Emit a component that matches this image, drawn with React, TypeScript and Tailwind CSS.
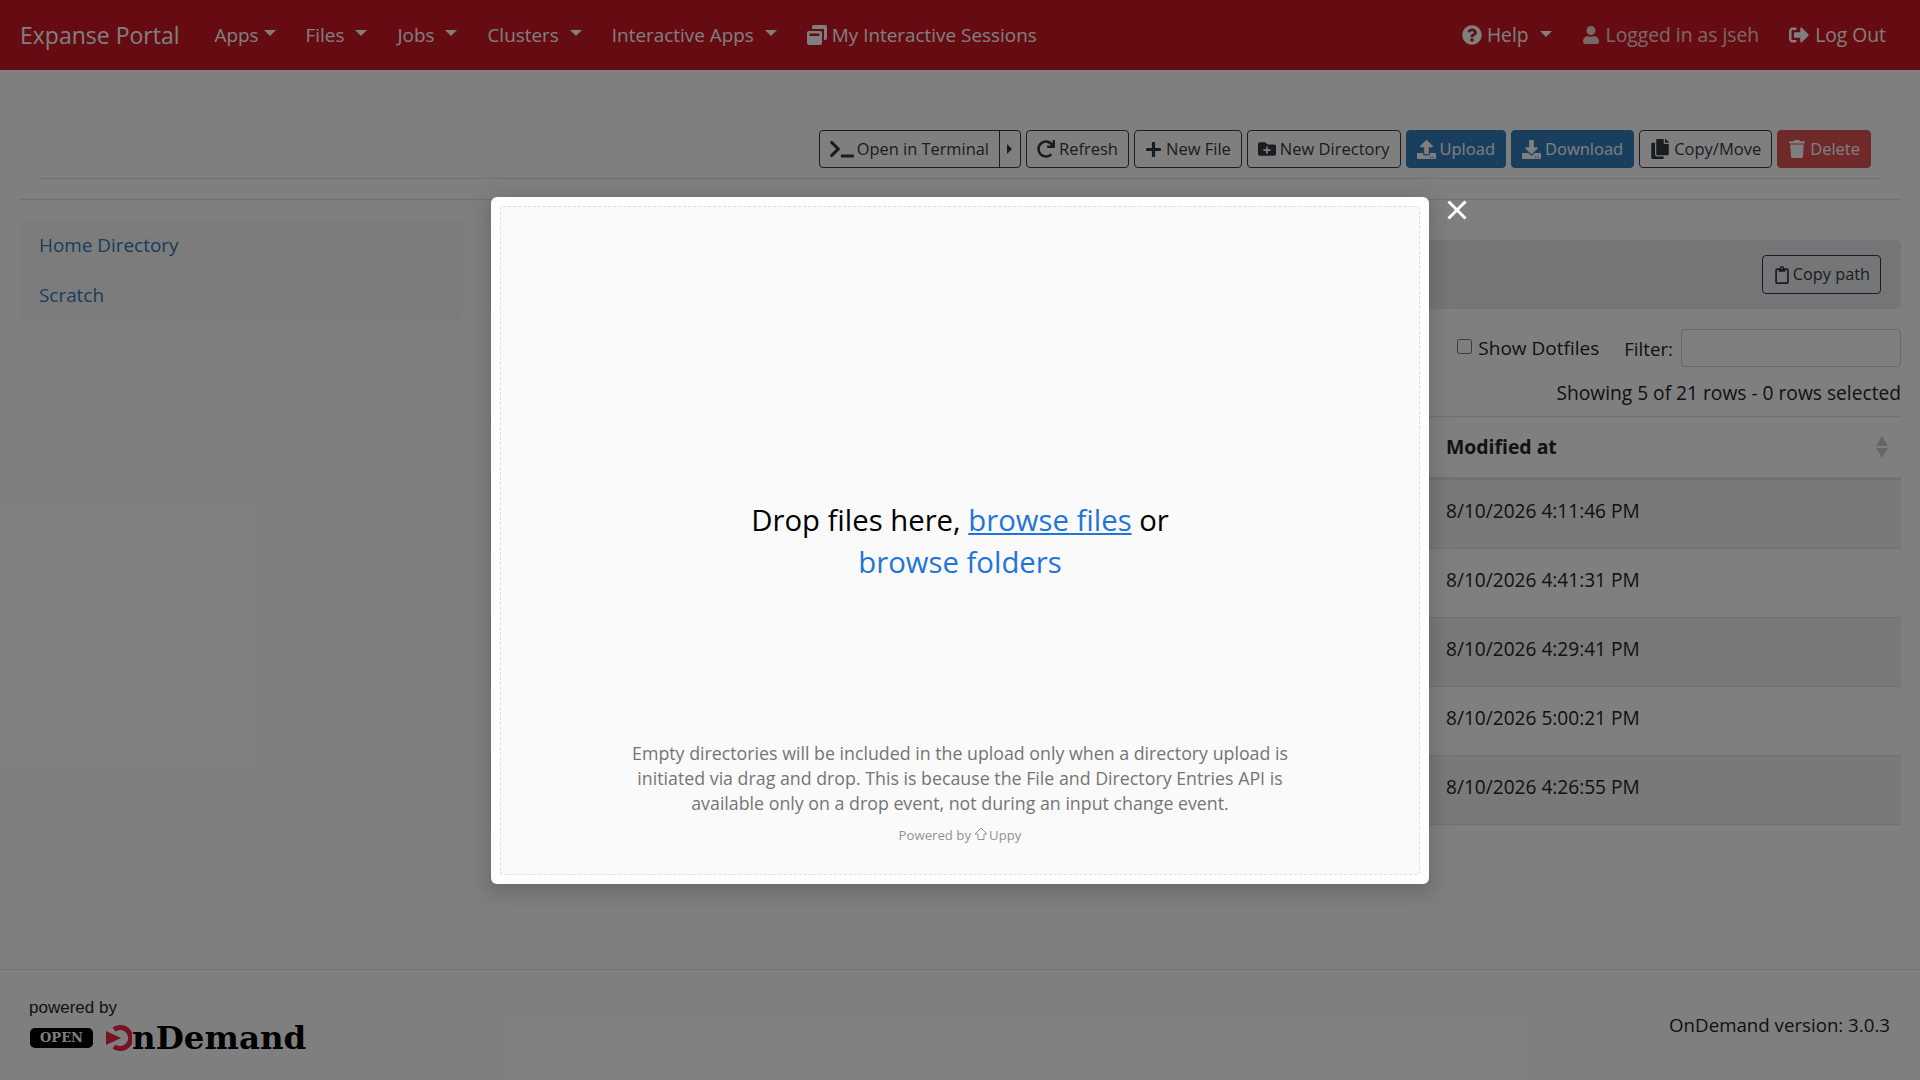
import React from 'react';
import {
  FaTerminal, FaRedo, FaPlus, FaFolderPlus, FaUpload, FaDownload, FaCopy, FaTrash,
  FaRegClipboard, FaQuestionCircle, FaUser, FaSignOutAlt,
} from 'react-icons/fa';

const NavLink = ({ label, spaced }: { label: string; spaced?: boolean }) => (
  <a className="mr-[10px] flex items-center px-[10px] text-[18.9px] text-white">
    {label}
    <span className={`${spaced ? 'ml-[11px]' : 'ml-[5px]'} mb-[3px] border-x-[6px] border-t-[6px] border-x-transparent border-t-white`} />
  </a>
);

const Btn = ({ icon, label, kind = 'outline' }: { icon: React.ReactNode; label: string; kind?: string }) => {
  const colors =
    kind === 'primary'
      ? 'bg-[#347dbb] border-[#347dbb] text-white'
      : kind === 'danger'
      ? 'bg-[#e05252] border-[#e05252] text-white'
      : 'border-[#343a40] text-[#343a40]';
  return (
    <button className={`flex h-[38px] items-center gap-[4px] rounded-[4px] border px-[10px] text-[16.5px] ${colors}`}>
      {icon}
      {label}
    </button>
  );
};

const rows = [
  '8/10/2026 4:11:46 PM',
  '8/10/2026 4:41:31 PM',
  '8/10/2026 4:29:41 PM',
  '8/10/2026 5:00:21 PM',
  '8/10/2026 4:26:55 PM',
];

export default function App() {
  return (
    <div className="relative flex h-[1080px] w-full flex-col overflow-hidden bg-white font-['Open_Sans',sans-serif] text-[19.1px] text-[#212529]">
      {/* Navbar */}
      <nav className="flex h-[70px] shrink-0 items-center justify-between bg-[#cd1622] pl-[10px] pr-[24px] text-[18.9px]">
        <div className="flex items-center">
          <a className="ml-[10px] mr-[25px] text-[23px] text-white">Expanse Portal</a>
          <NavLink label="Apps" />
          <NavLink label="Files" spaced />
          <NavLink label="Jobs" spaced />
          <NavLink label="Clusters" spaced />
          <NavLink label="Interactive Apps" spaced />
          <a className="flex items-center gap-[5px] px-[10px] text-white">
            <svg viewBox="0 0 20 21" className="h-[21px] w-[20px]" fill="currentColor">
              <path d="M5 5V3a2 2 0 0 1 2-2h11a2 2 0 0 1 2 2v11a2 2 0 0 1-2 2h-1V5Z" />
              <path fillRule="evenodd" d="M2 7h11a2 2 0 0 1 2 2v10a2 2 0 0 1-2 2H2a2 2 0 0 1-2-2V9a2 2 0 0 1 2-2ZM2.5 9.5v2.5h10V9.5Z" />
            </svg>
            My Interactive Sessions
          </a>
        </div>
        <div className="flex items-center text-[19.3px]">
          <a className="mr-[10px] flex items-center gap-[5px] px-[10px] text-white">
            <FaQuestionCircle className="text-[20px]" />
            <span className="flex items-center">
              Help
              <span className="ml-[11px] mb-[3px] border-x-[6px] border-t-[6px] border-x-transparent border-t-white" />
            </span>
          </a>
          <a className="mr-[10px] flex items-center gap-[6px] px-[10px] text-white/80">
            <FaUser className="text-[18px]" />
            Logged in as jseh
          </a>
          <a className="flex items-center gap-[6px] px-[10px] text-white">
            <FaSignOutAlt className="text-[20px]" />
            Log Out
          </a>
        </div>
      </nav>

      {/* Main */}
      <main className="flex-1 pl-[20px] pr-[19px]">
        <div className="ml-[17px] mr-[20px] flex justify-end gap-[5px] border-b border-[#dee2e6] pb-[10px] pr-[10px] pt-[60px]">
          <div className="flex h-[38px] rounded-[4px] border border-[#343a40] text-[16.4px] text-[#343a40]">
            <span className="flex items-center gap-[3px] border-r border-[#343a40] px-[10px]">
              <FaTerminal className="text-[24px]" />
              Open in Terminal
            </span>
            <span className="flex w-[20px] items-center justify-center">
              <span className="border-y-[5px] border-l-[5px] border-y-transparent border-l-[#343a40]" />
            </span>
          </div>
          <Btn icon={<FaRedo className="text-[18px]" />} label="Refresh" />
          <Btn icon={<FaPlus className="text-[17px]" />} label="New File" />
          <Btn icon={<FaFolderPlus className="text-[18px]" />} label="New Directory" />
          <Btn icon={<FaUpload className="text-[19px]" />} label="Upload" kind="primary" />
          <Btn icon={<FaDownload className="text-[19px]" />} label="Download" kind="primary" />
          <Btn icon={<FaCopy className="text-[20px]" />} label="Copy/Move" />
          <Btn icon={<FaTrash className="text-[18px]" />} label="Delete" kind="danger" />
        </div>
        <div className="mt-[20px] flex border-t border-[#dee2e6] pt-[20px]">
          <aside className="w-[443px] shrink-0">
            <div className="rounded-[5px] bg-[#f8f9fa] text-[18.9px] text-[#337ab7]">
              <a className="flex h-[50px] items-center px-[19px] pt-[1px]">Home Directory</a>
              <a className="flex h-[50px] items-center px-[19px] pt-[1px]">Scratch</a>
            </div>
          </aside>
          <section className="ml-[27px] flex-1">
            <div className="mt-[20px] flex h-[69px] items-center justify-end rounded-[5px] bg-[#e9ecef] pr-[20px]">
              <button className="flex h-[39px] items-center gap-[2px] rounded-[4px] border border-[#343a40] px-[10px] text-[16.3px] text-[#343a40]">
                <FaRegClipboard className="text-[18px]" />
                Copy path
              </button>
            </div>
            <div className="mt-[20px] flex h-[38px] items-center justify-end">
              <input type="checkbox" className="mr-[6px] mb-[3px] h-[15px] w-[15px] rounded-[3px]" />
              <span className="text-[19px]">Show Dotfiles</span>
              <span className="ml-[25px] mr-[8px] mt-[2px] text-[18.7px]">Filter:</span>
              <input className="h-[38px] w-[220px] rounded-[4px] border border-[#ced4da] bg-white" />
            </div>
            <div className="mt-[12px] border-b border-[#dee2e6] pb-[8px] text-right text-[19.2px]">
              Showing 5 of 21 rows - 0 rows selected
            </div>
            <div className="flex h-[63px] items-center justify-end border-b-[3px] border-[#dee2e6]">
              <div className="relative flex w-[455px] items-center text-[19.4px] font-bold">
                Modified at
                <span className="absolute right-[13px] top-1/2 flex -translate-y-1/2 flex-col gap-[2px]">
                  <span className="border-x-[6px] border-b-[10px] border-x-transparent border-b-black/20" />
                  <span className="border-x-[6px] border-t-[10px] border-x-transparent border-t-black/20" />
                </span>
              </div>
            </div>
            {rows.map((r, i) => (
              <div key={r} className={`flex h-[69px] items-center justify-end border-b border-[#dee2e6] pb-[5px] ${i % 2 === 0 ? 'bg-black/5' : ''}`}>
                <div className="w-[455px]">{r}</div>
              </div>
            ))}
          </section>
        </div>
      </main>

      {/* Footer */}
      <footer className="flex h-[111px] shrink-0 items-center justify-between border-t border-[#dee2e6] pl-[29px] pr-[30px]">
        <div className="-mt-[3px]">
          <div className="font-['Liberation_Sans',sans-serif] text-[17px] leading-[22px] text-[#212529]">powered by</div>
          <div className="mt-[6px] flex items-center">
            <span className="ml-[1px] flex h-[20px] w-[63px] items-center justify-center rounded-[5px] bg-black font-['DejaVu_Serif',serif] text-[13px] font-bold text-white">
              OPEN
            </span>
            <svg viewBox="0 0 26 26" className="ml-[13px] h-[26px] w-[26px]">
              <path d="M8 4.5A10.5 10.5 0 1 1 8 21.5" fill="none" stroke="#f02845" strokeWidth="5" />
              <path d="M0 6L15 13L0 20Z" fill="#f02845" />
            </svg>
            <span className="font-['DejaVu_Serif',serif] text-[32.5px] font-bold leading-[26px] text-black">nDemand</span>
          </div>
        </div>
        <div className="mt-[1px] text-[18.7px]">OnDemand version: 3.0.3</div>
      </footer>

      {/* Uppy modal overlay */}
      <div className="absolute inset-0 flex items-center justify-center bg-black/50">
        <div className="relative h-[687px] w-[938px] rounded-[6px] bg-white p-[9px] shadow-[0_6px_19px_5px_rgba(0,0,0,0.15)]">
          <button className="absolute right-[-38px] top-[3px] text-white">
            <svg viewBox="0 0 20 20" className="h-[20px] w-[20px]" fill="none" stroke="currentColor" strokeWidth="3">
              <path d="M1.5 1.5L18.5 18.5M18.5 1.5L1.5 18.5" />
            </svg>
          </button>
          <div className="flex h-full flex-col items-center rounded-[3px] border border-dashed border-[#dfdfdf] bg-[#fafafa]">
            <div className="mt-[292px] text-center text-[29.3px] leading-[42px] text-black">
              Drop files here, <a className="text-[#2275d7] underline">browse files</a> or
              <br />
              <a className="text-[#2275d7]">browse folders</a>
            </div>
            <div className="mt-[158px] text-center text-[17.8px] leading-[25px] text-[#757575]">
              Empty directories will be included in the upload only when a directory upload is
              <br />
              initiated via drag and drop. This is because the File and Directory Entries API is
              <br />
              available only on a drop event, not during an input change event.
            </div>
            <div className="mt-[10px] flex items-center gap-[1px] text-[13.2px] text-[#939393]">
              Powered by
              <svg viewBox="0 0 14 14" className="ml-[2px] -mt-[3px] h-[14px] w-[14px]" fill="none" stroke="currentColor" strokeWidth="1">
                <path d="M7 1L13 7H10V12.5H4V7H1Z" />
              </svg>
              <span>Uppy</span>
            </div>
          </div>
        </div>
      </div>
    </div>
  );
}
